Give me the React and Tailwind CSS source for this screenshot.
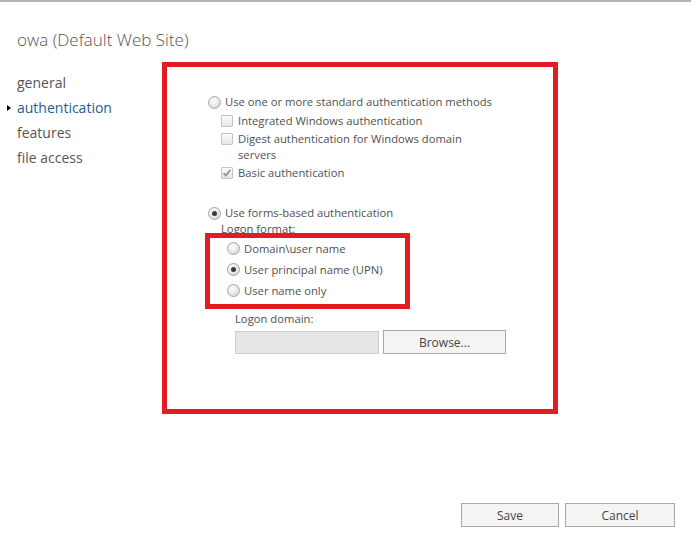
import React from 'react';

const font = { fontFamily: '"Open Sans", "Noto Sans", "Liberation Sans", sans-serif' };

function Radio({ checked }) {
  return (
    <span className="relative flex h-[13px] w-[13px] shrink-0 items-center justify-center rounded-full border border-[#a6a6a6] bg-[radial-gradient(circle_at_40%_35%,#ffffff_0%,#e6e6e6_55%,#c9c9c9_100%)]">
      {checked && <span className="h-[5px] w-[5px] rounded-full bg-[#3a3a3a]" />}
    </span>
  );
}

function Checkbox({ checked }) {
  return (
    <span className="flex h-[12px] w-[12px] shrink-0 items-center justify-center rounded-[1px] border border-[#c4c4c4] bg-[linear-gradient(#fbfbfb,#e6e6e6)]">
      {checked && (
        <svg width="10" height="10" viewBox="0 0 10 10">
          <path d="M1.6 5.2 L3.9 7.6 L8.4 1.8" fill="none" stroke="#939393" strokeWidth="1.8" />
        </svg>
      )}
    </span>
  );
}

const NAV = ['general', 'authentication', 'features', 'file access'];

export default function App() {
  return (
    <div style={font} className="flex h-[549px] w-[691px] flex-col border-t-2 border-[#b2b2b2] bg-white text-[#444]">
      <div className="h-[60px] pl-[17px] pt-[27px] text-[17px] font-light leading-[22px] text-[#555]">
        owa (Default Web Site)
      </div>

      <div className="flex">
        <ul className="w-[162px] pt-[8px] text-[14px] leading-[25px]">
          {NAV.map((item) => (
            <li key={item} className="flex items-center">
              <span className="flex w-[17px] justify-start pl-[7px]">
                {item === 'authentication' && (
                  <span className="h-0 w-0 border-y-[3.5px] border-l-[4px] border-y-transparent border-l-black" />
                )}
              </span>
              <span className={item === 'authentication' ? 'text-[#1f5d94]' : 'text-[#555]'}>{item}</span>
            </li>
          ))}
        </ul>

        <div className="h-[352px] w-[396px] border-[5px] border-[#e31b23] pt-[27px] text-[11.25px] leading-[16px] text-[#505050]">
          <div className="ml-[41px] flex items-center gap-[4px]">
            <Radio />
            <span>Use one or more standard authentication methods</span>
          </div>
          <div className="ml-[54px] mt-[3px] flex items-center gap-[5px]">
            <Checkbox />
            <span>Integrated Windows authentication</span>
          </div>
          <div className="ml-[54px] mt-[2px] flex items-start gap-[5px]">
            <span className="mt-[2px]">
              <Checkbox />
            </span>
            <span className="w-[240px]">Digest authentication for Windows domain servers</span>
          </div>
          <div className="ml-[54px] mt-[2px] flex items-center gap-[5px]">
            <Checkbox checked />
            <span>Basic authentication</span>
          </div>

          <div className="ml-[41px] mt-[24px] flex items-center gap-[4px]">
            <Radio checked />
            <span>Use forms-based authentication</span>
          </div>
          <div className="ml-[54px]">Logon format:</div>

          <div className="relative ml-[38px] mt-[-4px] h-[76px] w-[205px] border-[5px] border-[#e31b23] pl-[17px]">
            {[
              ['Domain\\user name', false],
              ['User principal name (UPN)', true],
              ['User name only', false],
            ].map(([label, on]) => (
              <div key={label} className="flex h-[21px] items-center gap-[4px]">
                <Radio checked={on} />
                <span>{label}</span>
              </div>
            ))}
          </div>

          <div className="ml-[68px] mt-[2px]">Logon domain:</div>
          <div className="ml-[68px] mt-[3px] flex items-center gap-[4px]">
            <div className="h-[23px] w-[144px] border border-[#cfcfcf] bg-[#e6e6e6]" />
            <button className="h-[24px] w-[123px] border border-[#a9a9a9] bg-[#f4f4f4] pt-[2px] text-[12px] text-[#444]">
              Browse...
            </button>
          </div>
        </div>
      </div>

      <div className="mt-auto flex justify-end gap-[6px] pb-[22px] pr-[16px] text-[12px]">
        <button className="h-[24px] w-[98px] border border-[#a9a9a9] bg-[#f4f4f4] pt-[2px] text-[#444]">Save</button>
        <button className="h-[24px] w-[110px] border border-[#a9a9a9] bg-[#f4f4f4] pt-[2px] text-[#444]">Cancel</button>
      </div>
    </div>
  );
}
